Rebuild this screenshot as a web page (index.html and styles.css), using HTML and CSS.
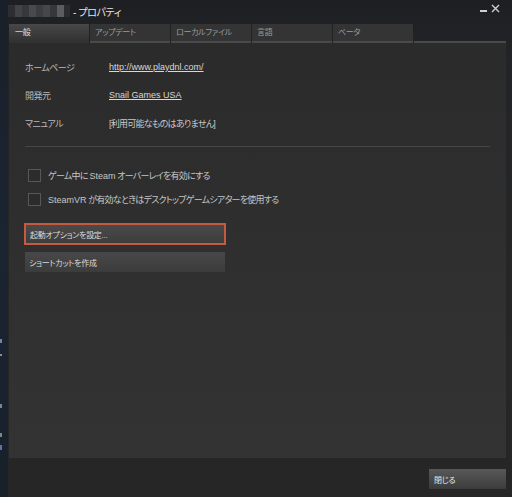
FILE: index.html
```html
<!DOCTYPE html>
<html lang="ja">
<head>
<meta charset="utf-8">
<link rel="stylesheet" href="styles.css">
</head>
<body>
<div class="screen">
  <div class="desktop">
    <span class="dicon i1"></span>
    <span class="dicon i2"></span>
    <span class="dicon i3"></span>
    <span class="dicon i4"></span>
    <span class="dicon i5"></span>
  </div>
  <div class="window">
    <div class="titlebar">
      <div class="blur">
        <span class="px p1"></span><span class="px p2"></span><span class="px p3"></span><span class="px p4"></span><span class="px p5"></span><span class="px p6"></span><span class="px p7"></span><span class="px p8"></span><span class="px p9"></span>
      </div>
      <span class="title">- プロパティ</span>
      <div class="controls">
        <span class="min"></span>
        <svg class="close-x" width="9" height="9" viewBox="0 0 9 9"><path d="M1 1L8 8M8 1L1 8" stroke="#cfcfcf" stroke-width="1.4"/></svg>
      </div>
    </div>
    <div class="tabs">
      <div class="tab active">一般</div>
      <div class="tab">アップデート</div>
      <div class="tab">ローカルファイル</div>
      <div class="tab">言語</div>
      <div class="tab">ベータ</div>
      <div class="tab-rest"></div>
    </div>
    <div class="panel">
      <div class="info">
        <div class="row"><span class="label">ホームページ</span><span class="value link">http://www.playdnl.com/</span></div>
        <div class="row"><span class="label">開発元</span><span class="value link">Snail Games USA</span></div>
        <div class="row"><span class="label">マニュアル</span><span class="value jp">[利用可能なものはありません]</span></div>
      </div>
      <div class="sep"></div>
      <div class="checks">
        <div class="check"><span class="box"></span><span class="jp">ゲーム中に <span class="lat">Steam</span> オーバーレイを有効にする</span></div>
        <div class="check"><span class="box"></span><span class="jp"><span class="lat">SteamVR</span> が有効なときはデスクトップゲームシアターを使用する</span></div>
      </div>
      <div class="btn focused">起動オプションを設定...</div>
      <div class="btn second">ショートカットを作成</div>
    </div>
    <div class="footer">
      <div class="btn closebtn">閉じる</div>
    </div>
  </div>
</div>
</body>
</html>
```

FILE: styles.css
```css
* { box-sizing: border-box; }
html, body { margin: 0; padding: 0; }
body {
  width: 512px;
  height: 497px;
  overflow: hidden;
  background: #1d222a;
  font-family: "Liberation Sans", "Noto Sans CJK JP", sans-serif;
  font-feature-settings: "palt";
  font-size: 9px;
  color: #c4c4c4;
}
.screen {
  display: flex;
  width: 512px;
  height: 497px;
}
.desktop {
  width: 8px;
  flex: none;
  background: linear-gradient(#1a2029, #1b2431 50%, #18202a);
  position: relative;
}
.dicon {
  position: absolute;
  left: 0;
  width: 2px;
  height: 4px;
  background: #6f86a6;
}
.i1 { top: 339px; }
.i2 { top: 354px; height: 2px; background: #8c8c8c; }
.i3 { top: 404px; }
.i4 { top: 433px; background: #7c8796; }
.i5 { top: 445px; background: #5676a8; height: 5px; }

.window {
  flex: 1;
  display: flex;
  flex-direction: column;
  background: linear-gradient(#1e1f23, #232427 60px, #262626 300px, #262626);
}
.titlebar {
  height: 24px;
  display: flex;
  align-items: center;
  position: relative;
}
.blur {
  display: flex;
  height: 12px;
  margin-top: -2px;
}
.px { width: 7px; height: 12px; }
.p1 { background: #2c2e33; }
.p2 { background: #414348; }
.p3 { background: #36383c; }
.p4 { background: #484a4e; }
.p5 { background: #3b3d41; }
.p6 { background: #45474b; }
.p7 { background: #35373b; }
.p8 { background: #5a5c60; }
.p9 { background: #2a2c30; width: 6px; }
.title {
  margin-left: 3px;
  margin-top: -2px;
  font-size: 10px;
  letter-spacing: -0.4px;
  color: #e8e8e8;
}
.controls {
  margin-left: auto;
  margin-right: 12px;
  margin-top: -8px;
  display: flex;
  align-items: center;
  gap: 4px;
}
.min {
  width: 7px;
  height: 2px;
  background: #cfcfcf;
  margin-top: 6px;
}
.close-x { display: block; }

.tabs {
  display: flex;
  height: 19px;
  margin-left: 1px;
  margin-right: 6px;
  gap: 1px;
}
.tab {
  width: 80px;
  height: 19px;
  padding: 4px 0 0 5px;
  font-size: 8px;
  letter-spacing: -0.3px;
  color: #9c9c9c;
  background: #343434;
  border-bottom: 2px solid #4a4a4a;
  line-height: 10px;
}
.tab.active {
  background: linear-gradient(#484848, #3b3b3b 60%, #323232);
  color: #e4e4e4;
  border-bottom: 2px solid #323232;
  padding-left: 6px;
}
.tab-rest {
  flex: 1;
  border-bottom: 2px solid #4a4a4a;
}

.panel {
  height: 415px;
  margin-left: 1px;
  margin-right: 6px;
  background: linear-gradient(#2b2b2b, #2f2f2f 50%, #333333);
  padding: 10px 16px 0 16px;
  display: flex;
  flex-direction: column;
  align-items: flex-start;
}
.info { width: 100%; }
.row {
  height: 28px;
  display: flex;
  align-items: center;
}
.label {
  width: 84px;
  color: #b9b9b9;
  letter-spacing: -0.5px;
}
.value { color: #c8c8c8; }
.jp { letter-spacing: -0.75px; }
.lat { letter-spacing: 0; }
.link {
  color: #d8d8d8;
  text-decoration: underline;
  text-underline-offset: 1px;
}
.sep {
  width: 465px;
  height: 1px;
  background: #464646;
  margin-top: 9px;
}
.checks {
  margin-top: 16px;
  display: flex;
  flex-direction: column;
}
.check {
  height: 24px;
  display: flex;
  align-items: center;
  gap: 7px;
  padding-left: 3px;
  color: #c6c6c6;
}
.box {
  width: 13px;
  height: 13px;
  border: 1px solid #575757;
  background: #2c2c2c;
}
.btn {
  display: flex;
  align-items: center;
  font-size: 8px;
  letter-spacing: -0.3px;
  color: #dcdcdc;
  background: linear-gradient(#4a4a4a, #3d3d3d);
}
.focused {
  width: 202px;
  height: 22px;
  margin-top: 12px;
  margin-left: -1px;
  border: 2px solid #c65a3e;
  padding-left: 4px;
}
.second {
  width: 200px;
  height: 20px;
  margin-top: 7px;
  padding-left: 4px;
  background: linear-gradient(#484848, #3c3c3c);
}
.footer {
  flex: 1;
  display: flex;
  justify-content: flex-end;
  align-items: flex-start;
  padding: 11px 6px 0 0;
}
.closebtn {
  width: 77px;
  height: 20px;
  padding-left: 5px;
  background: linear-gradient(#585858, #3c3c3c);
  color: #e6e6e6;
}
```
